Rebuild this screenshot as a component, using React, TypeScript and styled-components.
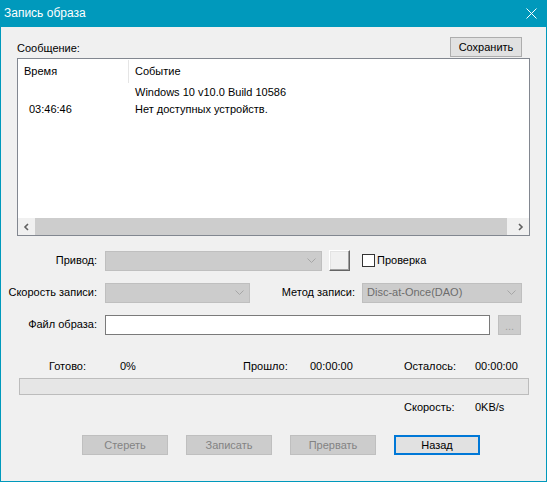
import React, { FC } from 'react';
import styled, { createGlobalStyle, css } from 'styled-components';

const GlobalStyle = createGlobalStyle`
    html, body {
        margin: 0;
        padding: 0;
        background: #f0f0f0;
    }
    * {
        box-sizing: border-box;
    }
`;

const ACCENT = '#0099bc';

const Window = styled.div`
    width: 547px;
    height: 482px;
    display: flex;
    flex-direction: column;
    border: 1px solid ${ACCENT};
    border-top: 0;
    background: #f0f0f0;
    font-family: "Liberation Sans", Arial, sans-serif;
    font-size: 11px;
    line-height: 13px;
    color: #000;
`;

const TitleBar = styled.div`
    height: 27px;
    flex: none;
    display: flex;
    align-items: center;
    justify-content: space-between;
    padding: 0 9px 1px 3px;
    background: ${ACCENT};
    color: #fff;
    font-size: 12px;
`;

const Body = styled.div`
    flex: 1;
    display: flex;
    flex-direction: column;
`;

const MessageHeader = styled.div`
    display: flex;
    align-items: center;
    justify-content: space-between;
    padding: 10px 24px 0 16px;
`;

const Caption = styled.span`
    padding-top: 2px;
`;

const buttonBase = css`
    height: 20px;
    padding: 0;
    font-family: inherit;
    font-size: 11px;
    line-height: 13px;
`;

const PushButton = styled.button<{ $width: number; $state?: 'normal' | 'disabled' | 'focused' }>`
    ${buttonBase};
    width: ${p => p.$width}px;
    color: ${p => (p.$state === 'disabled' ? '#838383' : '#000')};
    background: ${p => (p.$state === 'disabled' ? '#cccccc' : '#e1e1e1')};
    border: ${p =>
        p.$state === 'focused' ? '2px solid #0078d7' : p.$state === 'disabled' ? '1px solid #bfbfbf' : '1px solid #adadad'};
`;

const RaisedButton = styled.button`
    width: 21px;
    height: 21px;
    padding: 0;
    background: #f0f0f0;
    border: 1px solid;
    border-color: #fff #646464 #646464 #fff;
    box-shadow: inset -1px -1px 0 #a0a0a0, inset 1px 1px 0 #e3e3e3;
`;

const ListBox = styled.div`
    margin: 1px 16px 0;
    height: 178px;
    display: flex;
    flex-direction: column;
    border: 1px solid #828790;
    background: #fff;
`;

const ListHeader = styled.div`
    height: 25px;
    display: flex;
    align-items: center;
`;

const HeaderCell = styled.div<{ $width?: number }>`
    ${p => (p.$width ? `width: ${p.$width}px; border-right: 1px solid #e5e5e5;` : 'flex: 1;')}
    height: 23px;
    display: flex;
    align-items: center;
    padding-left: 6px;
`;

const ListRows = styled.div`
    flex: 1;
`;

const ListRow = styled.div`
    height: 17px;
    display: flex;
    align-items: center;
`;

const TimeCell = styled.div`
    width: 111px;
    padding-left: 11px;
`;

const EventCell = styled.div`
    flex: 1;
    padding-left: 6px;
    white-space: nowrap;
`;

const ScrollBar = styled.div`
    height: 17px;
    display: flex;
    background: #f0f0f0;
`;

const ScrollArrow = styled.div`
    width: 17px;
    display: flex;
    align-items: center;
    justify-content: center;
`;

const ScrollThumb = styled.div`
    width: 472px;
    background: #cdcdcd;
`;

const ScrollTrack = styled.div`
    flex: 1;
`;

const Form = styled.div`
    margin-top: 14px;
    display: flex;
    flex-direction: column;
    gap: 11px;
`;

const FormRow = styled.div`
    height: 21px;
    display: flex;
    align-items: center;
`;

const FieldLabel = styled.span<{ $width: number; $gap: number }>`
    width: ${p => p.$width}px;
    margin-right: ${p => p.$gap}px;
    text-align: right;
    white-space: nowrap;
`;

const Combo = styled.div<{ $width: number }>`
    width: ${p => p.$width}px;
    height: 20px;
    display: flex;
    align-items: center;
    justify-content: space-between;
    padding: 0 5px 0 4px;
    background: #cccccc;
    border: 1px solid #bfbfbf;
    color: #6d6d6d;
`;

const TextInput = styled.div`
    width: 385px;
    height: 20px;
    background: #fff;
    border: 1px solid #7a7a7a;
`;

const BrowseButton = styled.button`
    ${buttonBase};
    width: 23px;
    margin-left: 8px;
    color: #a0a0a0;
    background: #cccccc;
    border: 1px solid #bfbfbf;
    line-height: 20px;
`;

const CheckLabel = styled.label`
    display: flex;
    align-items: center;
    gap: 2px;
    margin-left: 12px;
`;

const CheckBox = styled.span`
    width: 13px;
    height: 13px;
    background: #fff;
    border: 1px solid #333;
`;

const StatsGrid = styled.div<{ $top: number }>`
    margin-top: ${p => p.$top}px;
    padding-left: 48px;
    display: grid;
    grid-template-columns: 71px 123px 67px 94px 71px auto;
    white-space: nowrap;
`;

const Cell = styled.span<{ $col?: number }>`
    ${p => (p.$col ? `grid-column: ${p.$col};` : '')}
`;

const Progress = styled.div`
    margin: 5px 0 0 18px;
    width: 510px;
    height: 17px;
    background: #e6e6e6;
    border: 1px solid #bcbcbc;
`;

const ButtonBar = styled.div`
    margin-top: 21px;
    padding-left: 81px;
    display: flex;
    gap: 18px;
`;

const Chevron: FC<{ dir: 'left' | 'right' | 'down' }> = ({ dir }) => {
    if (dir === 'down') {
        return (
            <svg width="9" height="5" viewBox="0 0 9 5">
                <polyline points="0.5,0.5 4.5,4.5 8.5,0.5" fill="none" stroke="#a6a6a6" strokeWidth="1" />
            </svg>
        );
    }
    const pts = dir === 'left' ? '5,1 2,4 5,7' : '2,1 5,4 2,7';
    return (
        <svg width="7" height="8" viewBox="0 0 7 8">
            <polyline points={pts} fill="none" stroke="#606060" strokeWidth="1.6" />
        </svg>
    );
};

const rows = [
    { time: '', event: 'Windows 10 v10.0 Build 10586' },
    { time: '03:46:46', event: 'Нет доступных устройств.' },
];

export default function App() {
    return (
        <>
            <GlobalStyle />
            <Window>
                <TitleBar>
                    <span>Запись образа</span>
                    <svg width="11" height="11" viewBox="0 0 11 11">
                        <path d="M0.5 0.5 L10.5 10.5 M10.5 0.5 L0.5 10.5" stroke="#fff" strokeWidth="1" />
                    </svg>
                </TitleBar>
                <Body>
                    <MessageHeader>
                        <Caption>Сообщение:</Caption>
                        <PushButton $width={72}>Сохранить</PushButton>
                    </MessageHeader>
                    <ListBox>
                        <ListHeader>
                            <HeaderCell $width={111}>Время</HeaderCell>
                            <HeaderCell>Событие</HeaderCell>
                        </ListHeader>
                        <ListRows>
                            {rows.map((r, i) => (
                                <ListRow key={i}>
                                    <TimeCell>{r.time}</TimeCell>
                                    <EventCell>{r.event}</EventCell>
                                </ListRow>
                            ))}
                        </ListRows>
                        <ScrollBar>
                            <ScrollArrow><Chevron dir="left" /></ScrollArrow>
                            <ScrollThumb />
                            <ScrollTrack />
                            <ScrollArrow><Chevron dir="right" /></ScrollArrow>
                        </ScrollBar>
                    </ListBox>
                    <Form>
                        <FormRow>
                            <FieldLabel $width={96} $gap={8}>Привод:</FieldLabel>
                            <Combo $width={217}><span /><Chevron dir="down" /></Combo>
                            <RaisedButton style={{ marginLeft: 7 }} />
                            <CheckLabel>
                                <CheckBox />
                                <span>Проверка</span>
                            </CheckLabel>
                        </FormRow>
                        <FormRow>
                            <FieldLabel $width={96} $gap={8}>Скорость записи:</FieldLabel>
                            <Combo $width={145}><span /><Chevron dir="down" /></Combo>
                            <FieldLabel $width={105} $gap={7}>Метод записи:</FieldLabel>
                            <Combo $width={160}><span>Disc-at-Once(DAO)</span><Chevron dir="down" /></Combo>
                        </FormRow>
                        <FormRow>
                            <FieldLabel $width={96} $gap={8}>Файл образа:</FieldLabel>
                            <TextInput />
                            <BrowseButton>...</BrowseButton>
                        </FormRow>
                    </Form>
                    <StatsGrid $top={25}>
                        <Cell>Готово:</Cell>
                        <Cell>0%</Cell>
                        <Cell>Прошло:</Cell>
                        <Cell>00:00:00</Cell>
                        <Cell>Осталось:</Cell>
                        <Cell>00:00:00</Cell>
                    </StatsGrid>
                    <Progress />
                    <StatsGrid $top={6}>
                        <Cell $col={5}>Скорость:</Cell>
                        <Cell $col={6}>0KB/s</Cell>
                    </StatsGrid>
                    <ButtonBar>
                        <PushButton $width={86} $state="disabled">Стереть</PushButton>
                        <PushButton $width={86} $state="disabled">Записать</PushButton>
                        <PushButton $width={86} $state="disabled">Прервать</PushButton>
                        <PushButton $width={86} $state="focused">Назад</PushButton>
                    </ButtonBar>
                </Body>
            </Window>
        </>
    );
}
